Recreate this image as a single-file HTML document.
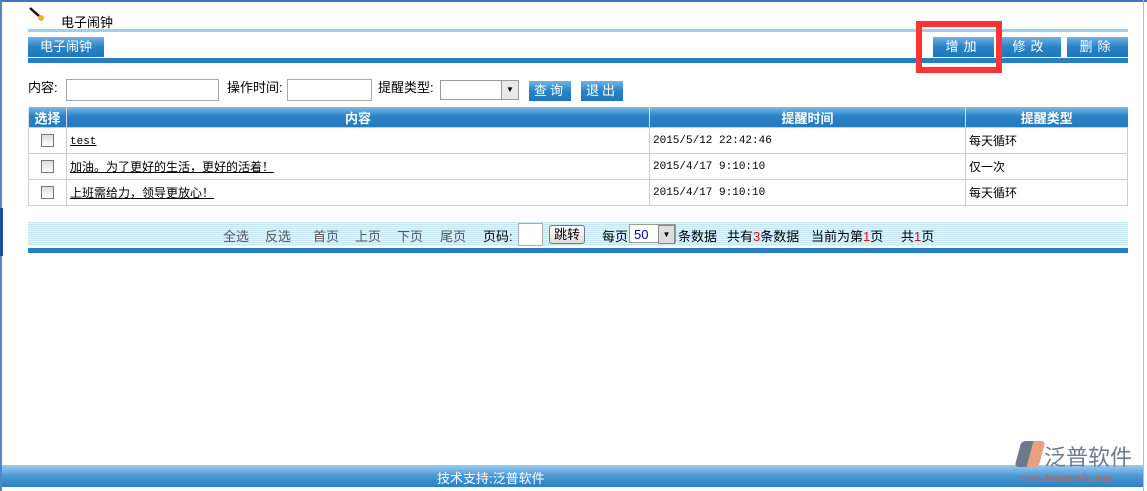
<!DOCTYPE html>
<html><head><meta charset="utf-8"><style>
body{margin:0;width:1147px;height:491px;position:relative;background:#fff;font-family:"Liberation Sans","Noto Sans CJK SC","WenQuanYi Zen Hei",sans-serif;font-size:12px;overflow:hidden;color:#000}
.a{position:absolute}
.btn{position:absolute;top:37px;height:20px;background:linear-gradient(#6fb3e6,#2a82c6 50%,#1f78be);color:#fff;font-size:13px;line-height:20px;text-align:center;letter-spacing:5px}
input.t{position:absolute;height:19px;border:1px solid #aaa;padding:0;box-sizing:border-box}
table{position:absolute;left:28px;top:107px;width:1100px;border-collapse:collapse}
th{height:20px;background:linear-gradient(#7fbbe8,#2a82c6 45%,#217bc1);color:#fff;font-size:13px;border-left:1px solid #dde;padding:0}
td{height:25px;border:1px solid #ccd;padding:0 3px;font-size:12px}
.cb{width:11px;height:11px;border:1px solid #777;background:linear-gradient(#ddd,#fff);margin:0 auto}
.p{position:absolute;top:226px;font-size:13px;color:#555;white-space:nowrap}
.q{position:absolute;top:226px;font-size:13px;color:#000;white-space:nowrap}
</style></head><body>
<div class="a" style="left:0;top:0;width:1147px;height:2px;background:#3a78c0"></div>
<div class="a" style="left:0;top:0;width:2px;height:491px;background:#4a88c8"></div>
<div class="a" style="left:0;top:208px;width:3px;height:48px;background:#1a4f90"></div>
<div class="a" style="left:1143px;top:0;width:1px;height:491px;background:#bbb"></div>
<svg class="a" style="left:28px;top:6px" width="18" height="16"><line x1="2" y1="2" x2="11" y2="10" stroke="#111" stroke-width="2.5"/><circle cx="13" cy="12" r="3" fill="#f5b02a"/></svg>
<div class="a" style="left:61px;top:12px;font-size:13px">电子闹钟</div>
<div class="a" style="left:28px;top:29px;width:1100px;height:3px;background:#a6cdef"></div>
<div class="btn" style="left:28px;width:76px;letter-spacing:0">电子闹钟</div>
<div class="btn" style="left:933px;width:61px">增加</div>
<div class="btn" style="left:1000px;width:61px">修改</div>
<div class="btn" style="left:1067px;width:61px">删除</div>
<div class="a" style="left:28px;top:58px;width:1100px;height:5px;background:#267fc2"></div>
<div class="a" style="left:916px;top:21px;width:74px;height:40px;border:6px solid #f33"></div>
<div class="a" style="left:28px;top:77px;font-size:13px">内容:</div>
<input class="t" style="left:66px;top:79px;width:153px;height:22px">
<div class="a" style="left:227px;top:77px;font-size:13px">操作时间:</div>
<input class="t" style="left:287px;top:79px;width:85px;height:22px">
<div class="a" style="left:378px;top:77px;font-size:13px">提醒类型:</div>
<div class="a" style="left:440px;top:80px;width:77px;height:18px;border:1px solid #999;background:#fff"><div class="a" style="right:0;top:0;width:16px;height:18px;background:#e8e8e8;border-left:1px solid #999;font-size:8px;text-align:center;line-height:18px">▼</div></div>
<div class="btn" style="left:529px;top:81px;width:42px;letter-spacing:3px">查询</div>
<div class="btn" style="left:581px;top:81px;width:42px;letter-spacing:3px">退出</div>
<table>
<tr><th style="width:37px">选择</th><th style="width:582px">内容</th><th style="width:315px">提醒时间</th><th>提醒类型</th></tr>
<tr><td><div class="cb"></div></td><td><u style="font-family:'Liberation Mono';font-size:11px">test</u></td><td style="font-family:'Liberation Mono';font-size:11px">2015/5/12 22:42:46</td><td>每天循环</td></tr>
<tr><td><div class="cb"></div></td><td><u>加油。为了更好的生活，更好的活着！</u></td><td style="font-family:'Liberation Mono';font-size:11px">2015/4/17 9:10:10</td><td>仅一次</td></tr>
<tr><td><div class="cb"></div></td><td><u>上班需给力，领导更放心！</u></td><td style="font-family:'Liberation Mono';font-size:11px">2015/4/17 9:10:10</td><td>每天循环</td></tr>
</table>
<div class="a" style="left:28px;top:222px;width:1100px;height:24px;background:repeating-linear-gradient(#c6e6f4 0,#c6e6f4 1px,#e6f5fb 1px,#e6f5fb 2px)"></div>
<div class="a" style="left:28px;top:248px;width:1100px;height:5px;background:#267fc2"></div>
<div class="p" style="left:223px">全选</div>
<div class="p" style="left:265px">反选</div>
<div class="p" style="left:313px">首页</div>
<div class="p" style="left:355px">上页</div>
<div class="p" style="left:397px">下页</div>
<div class="p" style="left:440px">尾页</div>
<div class="q" style="left:483px">页码:</div>
<div class="a" style="left:518px;top:223px;width:23px;height:21px;border:1px solid #aaa;background:#fff"></div>
<div class="a" style="left:549px;top:225px;width:34px;height:17px;border:1px solid #777;border-radius:3px;background:linear-gradient(#fff,#ddd);text-align:center;line-height:17px;font-size:13px">跳转</div>
<div class="q" style="left:602px">每页</div>
<div class="a" style="left:629px;top:224px;width:47px;height:19px;border:1px solid #999;background:#fff;color:#00a;line-height:19px;padding-left:4px;box-sizing:border-box;font-size:13px">50<div class="a" style="right:0;top:0;width:15px;height:17px;background:#ddd;border:1px solid #888;font-size:8px;text-align:center;line-height:17px;color:#000">▼</div></div>
<div class="q" style="left:678px">条数据</div>
<div class="q" style="left:727px">共有<span style="color:red">3</span>条数据</div>
<div class="q" style="left:811px">当前为第<span style="color:red">1</span>页</div>
<div class="q" style="left:901px">共<span style="color:red">1</span>页</div>
<div class="a" style="left:2px;top:465px;width:1141px;height:22px;background:linear-gradient(#9ccbf0,#4a98d6 50%,#2a7fc3)"></div>
<div class="a" style="left:437px;top:468px;color:#fff;font-size:13px">技术支持:泛普软件</div>
<div class="a" style="left:1018px;top:441px;width:24px;height:26px;background:linear-gradient(90deg,#6c7a90 50%,#e8a080 50%);transform:skewX(-15deg);border-radius:4px"></div>
<div class="a" style="left:1044px;top:440px;font-size:22px;color:#6c7a90">泛普软件</div>
<div class="a" style="left:1019px;top:472px;font-size:11px;color:#a07070;font-family:'Liberation Serif';font-weight:bold">www.fanpusoft.com</div>
</body></html>
